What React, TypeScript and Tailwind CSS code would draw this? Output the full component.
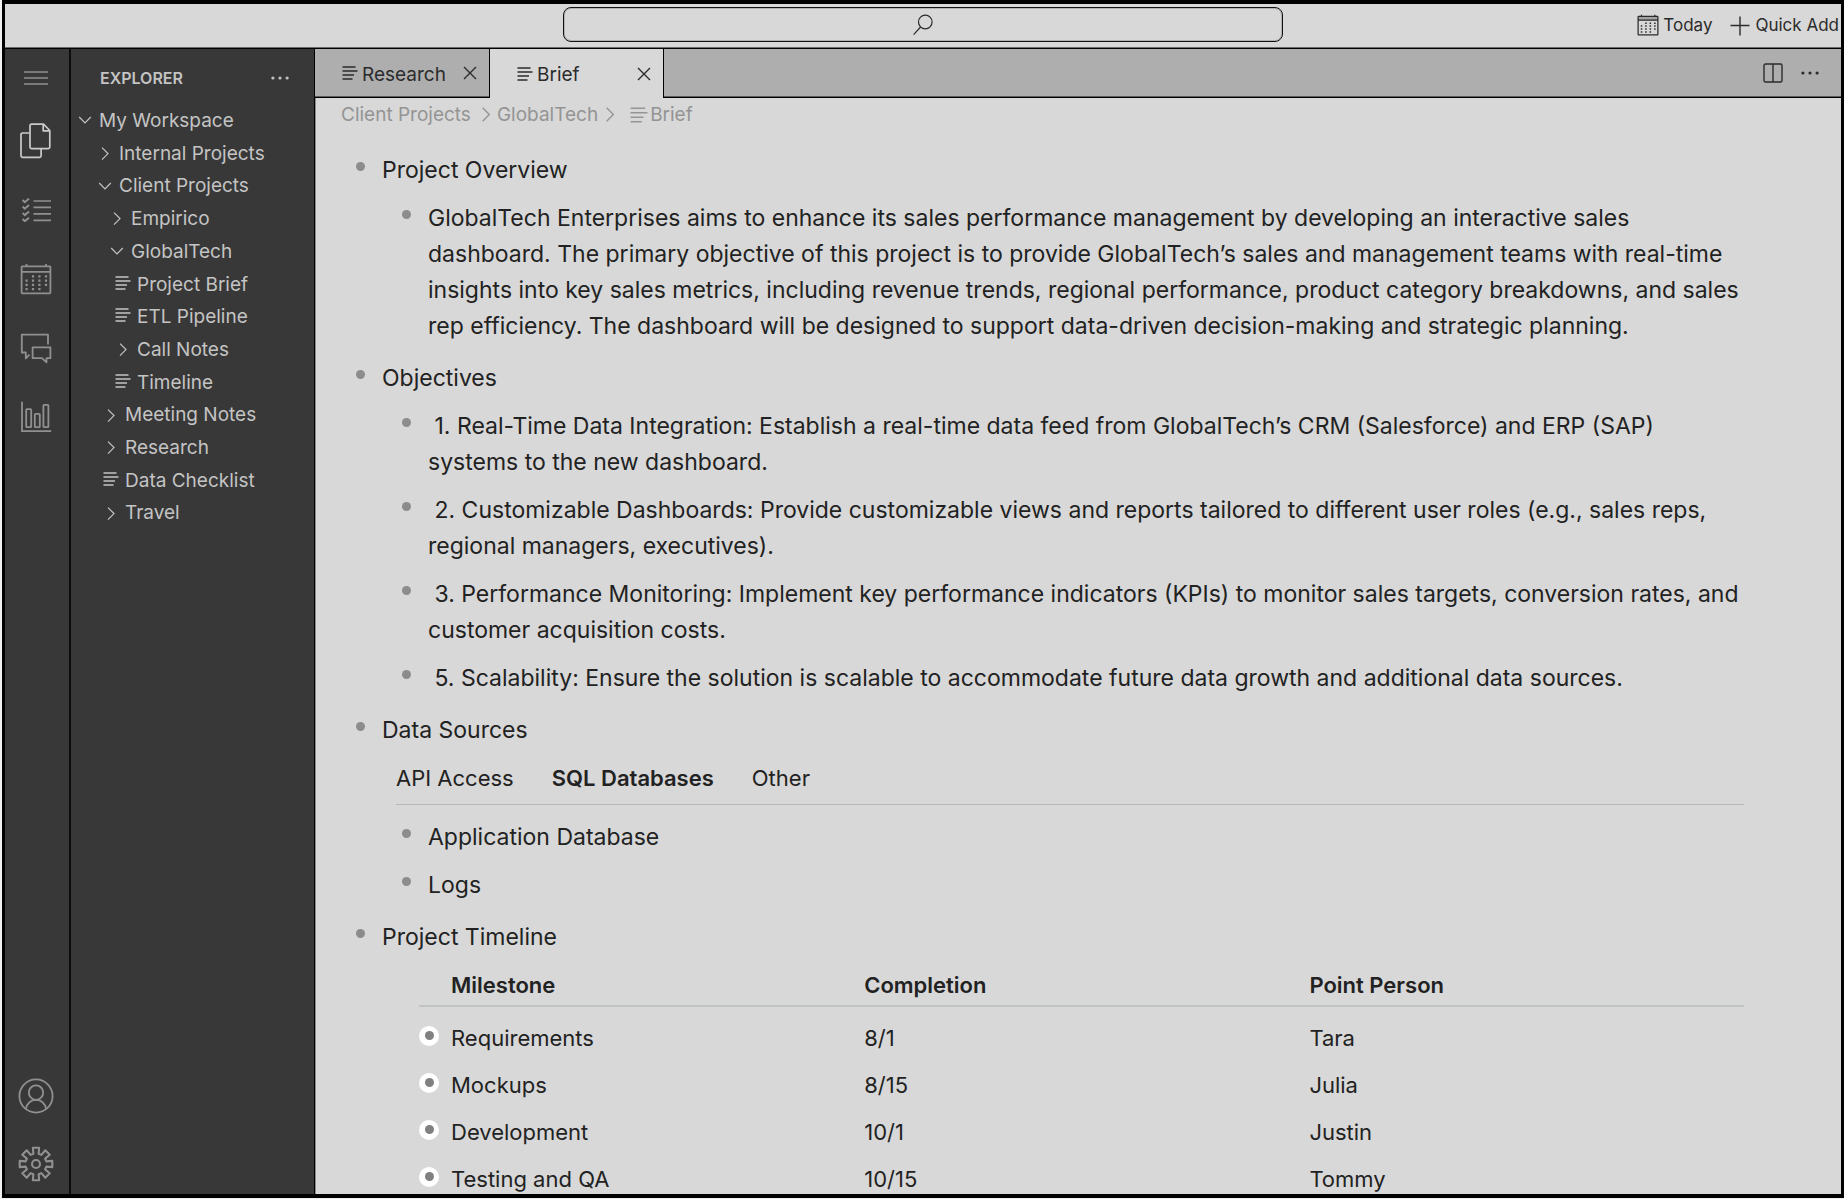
import React, { ReactNode } from "react";

type IconProps = { className?: string };

const DocLines = ({ className }: IconProps) => (
  <svg className={className} viewBox="0 0 16 14" fill="none" stroke="currentColor" strokeWidth="1.3" aria-hidden="true">
    <path d="M0.5 1H13.5M0.5 5H15.5M0.5 9H12M0.5 13H10.5" />
  </svg>
);

const ChevronRight = ({ className }: IconProps) => (
  <svg className={className} viewBox="0 0 16 16" fill="none" stroke="currentColor" strokeWidth="1.2" aria-hidden="true">
    <path d="M5 1.6L11 7.6L5 13.6" />
  </svg>
);

const ChevronDown = ({ className }: IconProps) => (
  <svg className={className} viewBox="0 0 16 16" fill="none" stroke="currentColor" strokeWidth="1.2" aria-hidden="true">
    <path d="M2.2 4L8 9.8L13.8 4" />
  </svg>
);

const CloseIcon = () => (
  <svg className="size-[14px]" viewBox="0 0 14 14" fill="none" stroke="currentColor" strokeWidth="1.4" aria-hidden="true">
    <path d="M1 1L13 13M13 1L1 13" />
  </svg>
);

const Dots = () => (
  <svg className="h-1 w-5" viewBox="0 0 20 4" fill="currentColor" aria-hidden="true">
    <circle cx="2.9" cy="2" r="1.6" />
    <circle cx="10" cy="2" r="1.6" />
    <circle cx="17.1" cy="2" r="1.6" />
  </svg>
);

const MenuIcon = () => (
  <svg className="h-4 w-6" viewBox="0 0 24 16" fill="none" stroke="currentColor" strokeWidth="1.4" aria-hidden="true">
    <path d="M0 2H24M0 8H24M0 14H24" />
  </svg>
);

const FilesIcon = () => (
  <svg className="size-9" viewBox="0 0 36 36" fill="none" stroke="currentColor" strokeWidth="1.7" strokeLinejoin="round" aria-hidden="true">
    <path d="M13.5 1.2H25.5L31.8 7.5V24Q31.8 25.6 30.2 25.6H13.5Q12 25.6 12 24V2.8Q12 1.2 13.5 1.2Z" />
    <path d="M25.2 1.5V7.8H31.5" />
    <path d="M11.5 10H4.6Q3 10 3 11.6V32.8Q3 34.4 4.6 34.4H21.5Q23.1 34.4 23.1 32.8V26" />
  </svg>
);

const ChecklistIcon = () => (
  <svg className="h-6 w-[30px]" viewBox="0 0 30 24" fill="none" stroke="currentColor" strokeWidth="1.7" aria-hidden="true">
    <path d="M12.5 3H30M12.5 9.4H30M12.5 15.9H30M12.5 22.3H30" />
    <path d="M1.6 2L3.8 4.2L8 0.6M1.6 8.5L3.8 10.7L8 7.1M1.6 14.9L3.8 17.1L8 13.5M1.6 21L3.8 23.2L8 19.8" strokeWidth="2" />
  </svg>
);

const CalendarIcon = ({ className, shaded = false }: IconProps & { shaded?: boolean }) => (
  <svg className={className} viewBox="0 0 32 32" fill="none" stroke="currentColor" strokeWidth="1.8" aria-hidden="true">
    <rect x="1.6" y="3.4" width="28.8" height="27" rx="0.8" />
    {shaded && <rect x="1.6" y="3.4" width="28.8" height="5.6" fill="currentColor" fillOpacity="0.3" stroke="none" />}
    <path d="M1.6 8.8H30.4M6.5 1V4M26 1V4" />
    <g strokeWidth="2.2" strokeDasharray="2.2 2.1">
      <path d="M13 12.2V27.4M19.4 12.2V27.4M26 12.2V23M6.6 16.5V27.4" />
    </g>
  </svg>
);

const ChatIcon = () => (
  <svg className="size-8" viewBox="0 0 32 32" fill="none" stroke="currentColor" strokeWidth="1.8" strokeLinejoin="round" aria-hidden="true">
    <path d="M28 12.5V2.6H1.8V20.5H5.8V26.4L9.5 22.6" />
    <path d="M12.6 15.3H30.4V26.2H26.5V30.3L22 26.2H12.6Z" />
  </svg>
);

const ChartIcon = () => (
  <svg className="size-8" viewBox="0 0 32 32" fill="none" stroke="currentColor" strokeWidth="1.8" aria-hidden="true">
    <path d="M2 0.8V30.2H31.2" />
    <rect x="6.2" y="8.2" width="5" height="18" rx="0.8" />
    <rect x="14.8" y="12.8" width="5" height="13.4" rx="0.8" />
    <rect x="23.4" y="3.8" width="5" height="22.4" rx="0.8" />
  </svg>
);

const UserIcon = () => (
  <svg className="size-9" viewBox="0 0 36 36" fill="none" stroke="currentColor" strokeWidth="1.8" aria-hidden="true">
    <circle cx="18" cy="18" r="16.6" />
    <circle cx="18" cy="14.6" r="7.2" />
    <path d="M7.8 31Q10 21.8 18 21.8Q26 21.8 28.2 31" />
  </svg>
);

const gearPath = (() => {
  const pts: string[] = [];
  for (let i = 0; i < 8; i++) {
    const a = (i * Math.PI) / 4;
    const at = (r: number, d: number) => `${(18 + r * Math.sin(a + d)).toFixed(2)} ${(18 - r * Math.cos(a + d)).toFixed(2)}`;
    pts.push(at(10.6, -0.25), at(16.6, -0.19), at(16.6, 0.19), at(10.6, 0.25));
  }
  return `M${pts.join("L")}Z`;
})();

const GearIcon = () => (
  <svg className="size-9" viewBox="0 0 36 36" fill="none" stroke="currentColor" strokeWidth="2.1" strokeLinejoin="round" aria-hidden="true">
    <path d={gearPath} />
    <circle cx="18" cy="18" r="4" />
  </svg>
);

const SearchIcon = () => (
  <svg className="h-[22px] w-5" viewBox="0 0 20 22" fill="none" stroke="currentColor" strokeWidth="1.2" aria-hidden="true">
    <circle cx="12.3" cy="8" r="6.8" />
    <path d="M7.6 13L0.6 20.6" />
  </svg>
);

const PlusIcon = () => (
  <svg className="size-5" viewBox="0 0 20 20" fill="none" stroke="currentColor" strokeWidth="1.4" aria-hidden="true">
    <path d="M10 0.5V19.5M0.5 9.5H19.5" />
  </svg>
);

const SplitIcon = () => (
  <svg className="size-5" viewBox="0 0 20 20" fill="none" stroke="currentColor" strokeWidth="1.4" aria-hidden="true">
    <rect x="1" y="1" width="18" height="18" rx="1.5" />
    <path d="M10 1V19" />
  </svg>
);

const activities: { label: string; icon: ReactNode; active?: boolean }[] = [
  { label: "Files", icon: <FilesIcon />, active: true },
  { label: "Tasks", icon: <ChecklistIcon /> },
  { label: "Calendar", icon: <CalendarIcon className="size-8" /> },
  { label: "Chat", icon: <ChatIcon /> },
  { label: "Reports", icon: <ChartIcon /> },
];

const tree: { name: string; kind: "open" | "closed" | "doc"; indent: string }[] = [
  { name: "My Workspace", kind: "open", indent: "pl-[6px]" },
  { name: "Internal Projects", kind: "closed", indent: "pl-[26px]" },
  { name: "Client Projects", kind: "open", indent: "pl-[26px]" },
  { name: "Empirico", kind: "closed", indent: "pl-[38px]" },
  { name: "GlobalTech", kind: "open", indent: "pl-[38px]" },
  { name: "Project Brief", kind: "doc", indent: "pl-[44px]" },
  { name: "ETL Pipeline", kind: "doc", indent: "pl-[44px]" },
  { name: "Call Notes", kind: "closed", indent: "pl-[44px]" },
  { name: "Timeline", kind: "doc", indent: "pl-[44px]" },
  { name: "Meeting Notes", kind: "closed", indent: "pl-[32px]" },
  { name: "Research", kind: "closed", indent: "pl-[32px]" },
  { name: "Data Checklist", kind: "doc", indent: "pl-[32px]" },
  { name: "Travel", kind: "closed", indent: "pl-[32px]" },
];

const objectives = [
  "1. Real-Time Data Integration: Establish a real-time data feed from GlobalTech’s CRM (Salesforce) and ERP (SAP) systems to the new dashboard.",
  "2. Customizable Dashboards: Provide customizable views and reports tailored to different user roles (e.g., sales reps, regional managers, executives).",
  "3. Performance Monitoring: Implement key performance indicators (KPIs) to monitor sales targets, conversion rates, and customer acquisition costs.",
  "5. Scalability: Ensure the solution is scalable to accommodate future data growth and additional data sources.",
];

const milestones = [
  ["Requirements", "8/1", "Tara"],
  ["Mockups", "8/15", "Julia"],
  ["Development", "10/1", "Justin"],
  ["Testing and QA", "10/15", "Tommy"],
];

const Bullet = () => <span className="mt-[10px] mr-[17px] size-[9px] shrink-0 rounded-full bg-[#8c8c8c]" />;

const Row = ({ children }: { children: ReactNode }) => (
  <div className="flex py-[6px]">
    <Bullet />
    <p>{children}</p>
  </div>
);

const Section = ({ title, children }: { title: string; children: ReactNode }) => (
  <li className="mb-1">
    <Row>{title}</Row>
    {children}
  </li>
);

const Sublist = ({ items }: { items: string[] }) => (
  <ul className="pl-[46px]">
    {items.map((item) => (
      <li key={item}>
        <Row>{item}</Row>
      </li>
    ))}
  </ul>
);

export default function App() {
  return (
    <div className="h-screen bg-[#f0f0f0] pb-px pl-[2px] font-['Inter',sans-serif]">
      <div className="flex h-full flex-col overflow-hidden border-y-4 border-r-[3px] border-l-[3px] border-black bg-[#d8d8d8] text-[#222222]">
        <header className="grid h-[45px] shrink-0 grid-cols-[1fr_720px_1fr] items-center border-b border-black text-[17px] text-[#2b2b2b] shadow-[inset_0_-1px_#6b6f6b]">
          <div />
          <div className="relative pb-[3px]">
            <input
              type="search"
              aria-label="Search"
              className="block h-[35px] w-full rounded-lg border border-[#111111] bg-transparent px-3 shadow-[inset_0_0_0_1px_#77777766] outline-none"
            />
            <span className="pointer-events-none absolute inset-x-0 top-0 flex h-[35px] items-center justify-center">
              <SearchIcon />
            </span>
          </div>
          <div className="flex items-center justify-end gap-[18px] pr-[2px]">
            <button className="flex items-center gap-1">
              <CalendarIcon className="mb-[2px] size-[22px]" shaded />
              Today
            </button>
            <button className="flex items-center gap-[5px]">
              <PlusIcon />
              Quick Add
            </button>
          </div>
        </header>

        <div className="flex min-h-0 flex-1">
          <nav aria-label="Activities" className="flex w-[66px] shrink-0 flex-col items-center border-r-2 border-[#0d0d0d] bg-[#383838] pr-[2px] text-[#909090]">
            <button aria-label="Menu" className="flex h-[57px] w-full items-center justify-center">
              <MenuIcon />
            </button>
            {activities.map((a) => (
              <button
                key={a.label}
                aria-label={a.label}
                className={`flex h-[69px] w-full items-center justify-center ${a.active ? "text-[#cacaca]" : ""}`}
              >
                {a.icon}
              </button>
            ))}
            <button aria-label="Account" className="mt-auto flex h-[75px] w-full items-center justify-center">
              <UserIcon />
            </button>
            <button aria-label="Settings" className="flex h-[61px] w-full items-center justify-center">
              <GearIcon />
            </button>
          </nav>

          <aside className="w-[244px] shrink-0 border-r border-black bg-[#383838] text-[19px] text-[#c4c4c4]">
            <div className="flex h-14 items-center justify-between pt-[2px] pr-6 pl-[29px]">
              <h2 className="text-base font-semibold">EXPLORER</h2>
              <button aria-label="Explorer options">
                <Dots />
              </button>
            </div>
            <ul className="grid h-[425px] auto-rows-fr">
              {tree.map((n) => (
                <li key={n.name} className={`flex ${n.indent}`}>
                  <button className="flex items-center gap-[6px] whitespace-nowrap">
                    {n.kind === "open" && <ChevronDown className="size-4" />}
                    {n.kind === "closed" && <ChevronRight className="size-4" />}
                    {n.kind === "doc" && <DocLines className="mb-1 h-[14px] w-4" />}
                    {n.name}
                  </button>
                </li>
              ))}
            </ul>
          </aside>

          <main className="flex min-w-0 flex-1 flex-col shadow-[inset_1px_0_#8c8c8c]">
            <div role="tablist" className="flex h-[49px] shrink-0 text-[19px] text-[#2b2b2b]">
              <div className="flex w-[175px] items-center justify-between border-r border-b border-black bg-[#aeaeae] pr-3 pl-[27px] shadow-[inset_0_-1px_#5c5c5c]">
                <button role="tab" aria-selected="false" className="flex items-center gap-1 pt-1">
                  <DocLines className="mb-1 h-[14px] w-4" />
                  Research
                </button>
                <button aria-label="Close Research">
                  <CloseIcon />
                </button>
              </div>
              <div className="flex w-[174px] items-center justify-between border-r border-black pr-3 pl-[27px]">
                <button role="tab" aria-selected="true" className="flex items-center gap-1 pt-1">
                  <DocLines className="mb-1 h-[14px] w-4" />
                  Brief
                </button>
                <button aria-label="Close Brief">
                  <CloseIcon />
                </button>
              </div>
              <div className="flex flex-1 items-center justify-end gap-[17px] border-b border-black bg-[#aeaeae] pr-[21px] shadow-[inset_0_-1px_#5c5c5c]">
                <button aria-label="Split editor">
                  <SplitIcon />
                </button>
                <button aria-label="Editor options">
                  <Dots />
                </button>
              </div>
            </div>

            <nav aria-label="Breadcrumb" className="flex h-[34px] shrink-0 items-center pl-[26px] text-[19px] text-[#949494]">
              <a href="#client-projects">Client Projects</a>
              <ChevronRight className="mr-[2px] ml-[6px] size-[18px]" />
              <a href="#globaltech">GlobalTech</a>
              <ChevronRight className="mr-[11px] ml-[3px] size-[18px]" />
              <a href="#brief" className="flex items-center gap-[2px]">
                <DocLines className="h-4 w-[18px]" />
                Brief
              </a>
            </nav>

            <ul className="min-h-0 flex-1 overflow-hidden pt-[14px] pr-[97px] pl-[41px] text-[23px] leading-9">
              <Section title="Project Overview">
                <Sublist
                  items={[
                    "GlobalTech Enterprises aims to enhance its sales performance management by developing an interactive sales dashboard. The primary objective of this project is to provide GlobalTech’s sales and management teams with real-time insights into key sales metrics, including revenue trends, regional performance, product category breakdowns, and sales rep efficiency. The dashboard will be designed to support data-driven decision-making and strategic planning.",
                  ]}
                />
              </Section>
              <Section title="Objectives">
                <Sublist items={objectives.map((o) => `\u00a0${o}`)} />
              </Section>
              <Section title="Data Sources">
                <div role="tablist" className="mb-2 ml-10 flex h-[51px] items-start gap-[38px] border-b border-[#b8b8b8] py-[6px] text-[22px]">
                  <button role="tab" aria-selected="false">API Access</button>
                  <button role="tab" aria-selected="true" className="font-semibold">SQL Databases</button>
                  <button role="tab" aria-selected="false">Other</button>
                </div>
                <Sublist items={["Application Database", "Logs"]} />
              </Section>
              <Section title="Project Timeline">
                <div className="pl-[63px]">
                  <table className="w-full table-fixed text-left text-[22px]">
                    <thead>
                      <tr className="h-[45px] border-b-2 border-[#bfc3c2] align-top">
                        <th className="w-[33.6%] pt-[6px] pl-8 font-semibold">Milestone</th>
                        <th className="w-[33.6%] pt-[6px] font-semibold">Completion</th>
                        <th className="pt-[6px] font-semibold">Point Person</th>
                      </tr>
                    </thead>
                    <tbody className="leading-6 before:block before:h-[7px]">
                      {milestones.map(([name, date, person]) => (
                        <tr key={name} className="h-[47px]">
                          <td>
                            <span className="flex items-center gap-3">
                              <span className="mb-1 flex size-5 items-center justify-center rounded-full bg-white">
                                <span className="size-[9px] rounded-full bg-[#808080]" />
                              </span>
                              {name}
                            </span>
                          </td>
                          <td>{date}</td>
                          <td>{person}</td>
                        </tr>
                      ))}
                    </tbody>
                  </table>
                </div>
              </Section>
            </ul>
          </main>
        </div>
      </div>
    </div>
  );
}
